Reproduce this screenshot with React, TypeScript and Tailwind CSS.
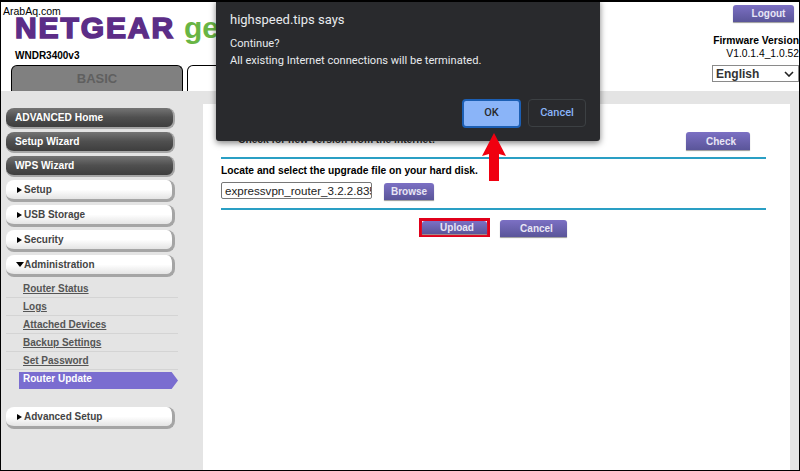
const darkItems = ["ADVANCED Home", "Setup Wizard", "WPS Wizard"];
const whiteItems = ["Setup", "USB Storage", "Security"];
const subItems = ["Router Status", "Logs", "Attached Devices", "Backup Settings", "Set Password"];

function PurpleButton({ label, className }: { label: string; className: string }) {
  return (
    <button className={"flex items-center justify-center bg-gradient-to-b from-[#7c70c4] to-[#5a5599] text-[10px] font-bold text-[#e8e6f5] rounded-t-[3px] shadow-[0_1px_1px_#999] " + className}>
      {label}
    </button>
  );
}

function WhiteMenu({ label, open }: { label: string; open?: boolean }) {
  return (
    <div className="h-[22px] w-[169px] flex items-center pl-[11px] gap-[2px] rounded-[8px] bg-gradient-to-b from-white via-white to-[#e4e4e4] border-r-[3px] border-b-[3px] border-[#a5a5a5] text-[10px] font-bold text-[#444]">
      {open ? (
        <span className="w-0 h-0 border-x-[4px] border-x-transparent border-t-[5px] border-t-black -ml-[1px] -mr-[2px]" />
      ) : (
        <span className="w-0 h-0 border-y-[3px] border-y-transparent border-l-[5px] border-l-black" />
      )}
      {label}
    </div>
  );
}

export default function App() {
  return (
    <div className="relative w-[800px] h-[471px] overflow-hidden bg-white border border-t-2 border-black font-['Liberation_Sans',Arial,sans-serif] text-black">
      <div className="flex justify-between h-[89px]">
        <div className="flex flex-col pl-[14px]">
          <div className="flex items-baseline h-[39px] pt-[10px] leading-[32px]">
            <span className="text-[30px] font-black text-[#5c2d87] tracking-[1.9px] [-webkit-text-stroke:1.6px_#5c2d87]">NETGEAR</span>
            <span className="text-[30px] font-bold text-[#69b544] ml-[9px]">genie</span>
          </div>
          <div className="text-[10px] font-bold leading-[12px] mt-[9px]">WNDR3400v3</div>
          <div className="flex mt-[3px] -ml-[4px] gap-[4px]">
            <div className="w-[172px] h-[26px] flex items-center justify-center rounded-t-[6px] bg-[#808080] border border-b-0 border-black text-[13px] font-bold text-[#5f5f5f]">BASIC</div>
            <div className="w-[172px] h-[26px] rounded-t-[6px] bg-white border border-b-0 border-black" />
          </div>
        </div>
        <div className="flex flex-col items-end pt-[3px]">
          <PurpleButton label="Logout" className="w-[61px] h-[17px] mr-[5px] pl-[10px]" />
          <div className="text-[10.3px] font-bold leading-[13px] mt-[12px]">Firmware Version</div>
          <div className="text-[10.3px] leading-[13px]">V1.0.1.4_1.0.52</div>
          <div className="w-[87px] h-[17px] mt-[5px] flex items-center justify-between pl-[3px] pr-[4px] border border-[#8a8a8a] text-[12px] font-bold text-[#333]">
            English
            <svg width="10" height="6" viewBox="0 0 10 6" fill="none" stroke="#222" strokeWidth="1.6"><path d="M1 1l4 4 4-4" /></svg>
          </div>
        </div>
      </div>

      <div className="flex h-[379px] bg-[#e4e4e4]">
        <div className="w-[202px] pl-[5px] pt-[17px] flex flex-col">
          <div className="flex flex-col gap-[3px]">
            {darkItems.map((item) => (
              <div key={item} className="h-[21px] w-[169px] flex items-center pl-[9px] rounded-[8px] bg-gradient-to-b from-[#757575] via-[#4f4f4f] to-[#3e3e3e] border-r-[2px] border-b-[2px] border-[#a5a5a5] text-[10.2px] font-bold text-white">
                {item}
              </div>
            ))}
          </div>
          <div className="flex flex-col gap-[3px] mt-[3px]">
            {whiteItems.map((item) => (
              <WhiteMenu key={item} label={item} />
            ))}
            <WhiteMenu label="Administration" open />
          </div>
          <div className="flex flex-col w-[172px] mt-[3px]">
            {subItems.map((item) => (
              <div key={item} className="h-[18px] flex items-center pl-[17px] border-b border-[#d4d4d4] text-[10px] font-bold text-[#555] underline">
                {item}
              </div>
            ))}
            <div className="h-[17px] mt-[2px] ml-[13px] pl-[4px] pt-[1px] bg-[#7a6dd0] text-[10px] font-bold leading-[12px] text-white [clip-path:polygon(0_0,96%_0,100%_50%,96%_100%,0_100%)]">
              Router Update
            </div>
          </div>
          <div className="mt-[18px]">
            <WhiteMenu label="Advanced Setup" />
          </div>
        </div>

        <div className="flex-1 mr-[9px] mt-[13px] bg-white pl-[18px] pr-[24px]">
          <div className="flex justify-between items-end h-[46px] pl-[17px]">
            <span className="text-[10.25px] font-bold leading-[12px] mb-[4px] text-[#333]">Check for new version from the Internet!</span>
            <PurpleButton label="Check" className="w-[64px] h-[18px] mr-[16px] pl-[6px]" />
          </div>
          <div className="h-[2px] bg-[#2a9fc4] mt-[7px]" />
          <div className="text-[10.25px] font-bold leading-[14px] mt-[5px]">Locate and select the upgrade file on your hard disk.</div>
          <div className="flex items-start gap-[12px] mt-[4px]">
            <div className="w-[151px] h-[17px] pl-[3px] border border-[#777] rounded-[2px] text-[11.6px] leading-[15px] text-[#222] overflow-hidden whitespace-nowrap">expressvpn_router_3.2.2.835</div>
            <PurpleButton label="Browse" className="w-[50px] h-[17px] mt-[1px]" />
          </div>
          <div className="h-[2px] bg-[#2a9fc4] mt-[8px]" />
          <div className="flex items-end justify-center gap-[10px] mt-[8px] pr-[1px]">
            <div className="border-[3px] border-[#e0001b]">
              <PurpleButton label="Upload" className="w-[65px] h-[13px] rounded-none pl-[5px]" />
            </div>
            <PurpleButton label="Cancel" className="w-[67px] h-[17px] pl-[6px]" />
          </div>
        </div>
      </div>

      <div className="absolute left-[2px] top-[3px] text-[10.5px] leading-[12px] text-black">ArabAq.com</div>

      <div className="absolute left-[215px] -top-[2px] w-[384px] h-[141px] bg-[#292a2d] rounded-b-[3px] shadow-[0_2px_6px_rgba(0,0,0,0.5)] text-[#e8eaed] font-['Roboto',sans-serif]">
        <div className="text-[13px] leading-[16px] mt-[12px] ml-[14px]">highspeed.tips says</div>
        <div className="text-[11.1px] leading-[14px] mt-[9px] ml-[14px]">Continue?</div>
        <div className="text-[11.1px] leading-[14px] mt-[3px] ml-[14px]">All existing Internet connections will be terminated.</div>
        <div className="flex justify-end gap-[7px] mt-[31px] pr-[14px] text-[11px] font-medium">
          <button className="w-[59px] h-[29px] rounded-[4px] bg-[#8ab4f8] border-2 border-[#1c5fb4] text-[#292a2d]">OK</button>
          <button className="w-[58px] h-[28px] rounded-[4px] border border-[#3c4043] text-[#8ab4f8]">Cancel</button>
        </div>
      </div>

      <svg className="absolute left-[481px] top-[131px]" width="26" height="50" viewBox="0 0 26 50">
        <path d="M12 0 L24 23 L17 21 L17 48 L7 48 L7 21 L0 23 Z" fill="#f00010" />
      </svg>
    </div>
  );
}
